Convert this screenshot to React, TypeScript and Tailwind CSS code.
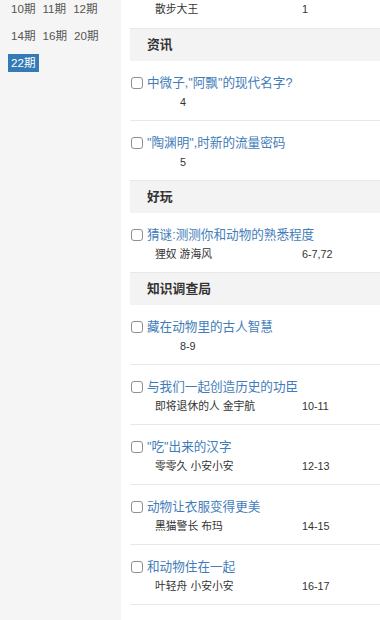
const issues = ["10期", "11期", "12期", "14期", "16期", "20期", "22期"]

type Item = { title: string; author: string; page: string }
type Section = { name: string; items: Item[] }

const sections: Section[] = [
  {
    name: "资讯",
    items: [
      { title: "中微子,\"阿飘\"的现代名字?", author: "", page: "4" },
      { title: "\"陶渊明\",时新的流量密码", author: "", page: "5" },
    ],
  },
  {
    name: "好玩",
    items: [{ title: "猜谜:测测你和动物的熟悉程度", author: "狸奴 游海风", page: "6-7,72" }],
  },
  {
    name: "知识调查局",
    items: [
      { title: "藏在动物里的古人智慧", author: "", page: "8-9" },
      { title: "与我们一起创造历史的功臣", author: "即将退休的人 金宇航", page: "10-11" },
      { title: "\"吃\"出来的汉字", author: "零零久 小安小安", page: "12-13" },
      { title: "动物让衣服变得更美", author: "黑猫警长 布玛", page: "14-15" },
      { title: "和动物住在一起", author: "叶轻舟 小安小安", page: "16-17" },
    ],
  },
]

function SubLine({ author, page }: { author: string; page: string }) {
  return (
    <div className="flex h-[19px] items-center pl-[25px] text-[10.8px] text-[#333]">
      {author ? <span className="w-[147px] shrink-0">{author}</span> : <span className="w-[25px] shrink-0" />}
      <span>{page}</span>
    </div>
  )
}

function Row({ item }: { item: Item }) {
  return (
    <div className="border-b border-[#e8e8e8] pt-[12px] pb-[8px]">
      <div className="flex h-[20px] items-center gap-[4px] pl-[1px]">
        <input
          type="checkbox"
          className="m-0 h-[12px] w-[12px] shrink-0 appearance-none rounded-[3px] border border-[#8f8f8f] bg-white"
        />
        <span className="text-[12.6px] text-[#3f7cb9]">{item.title}</span>
      </div>
      <SubLine author={item.author} page={item.page} />
    </div>
  )
}

export default function App() {
  return (
    <div className="flex min-h-[620px] w-[380px] bg-white font-['Liberation_Sans','Noto_Sans_CJK_SC',sans-serif]">
      {/* Issue list */}
      <aside className="w-[121px] shrink-0 bg-[#f5f5f5] pl-[8px]">
        <div className="flex flex-wrap gap-x-[1px] gap-y-[9px]">
          {issues.map((issue, i) => (
            <span
              key={issue}
              className={`flex h-[18px] items-center px-[3px] text-[11.6px] ${
                i === issues.length - 1 ? "bg-[#337ab7] text-white" : "text-[#555]"
              }`}
            >
              {issue}
            </span>
          ))}
        </div>
      </aside>

      {/* Contents */}
      <main className="flex-1 pl-[9px]">
        <div className="border-b border-[#e8e8e8] pb-[9px]">
          <SubLine author="散步大王" page="1" />
        </div>
        {sections.map((section) => (
          <div key={section.name}>
            <div className="flex h-[32px] items-center bg-[#f3f3f3] pl-[17px] text-[12.8px] font-bold text-[#333]">
              {section.name}
            </div>
            {section.items.map((item) => (
              <Row key={item.title} item={item} />
            ))}
          </div>
        ))}
      </main>
    </div>
  )
}
